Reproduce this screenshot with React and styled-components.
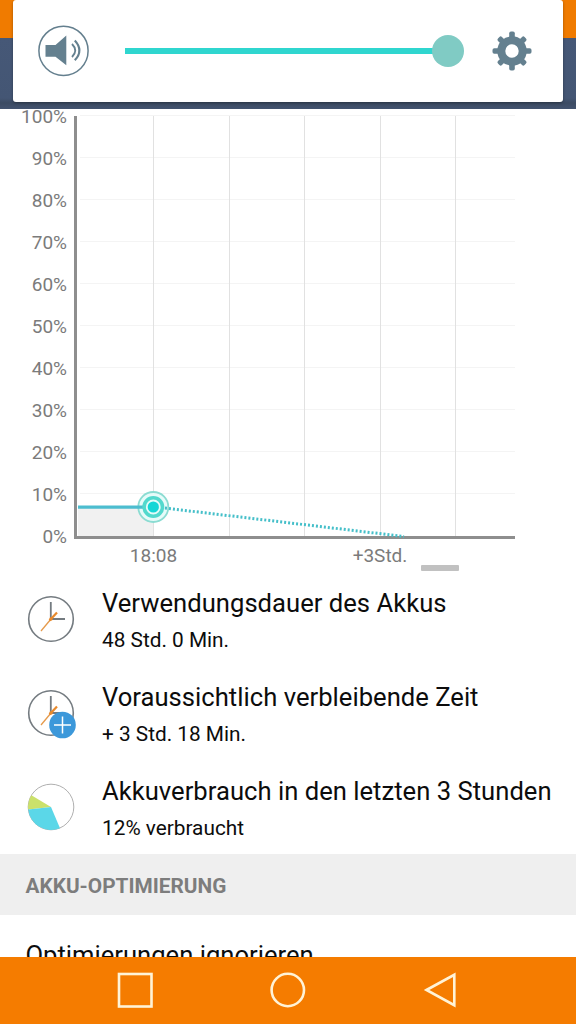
import React from "react";
import styled, { createGlobalStyle } from "styled-components";

const GlobalStyle = createGlobalStyle`
  body {
    margin: 0;
    background: #fff;
    font-family: Roboto, "Noto Sans", sans-serif;
  }
`;

const Screen = styled.div`
  position: relative;
  width: 576px;
  height: 1024px;
  display: flex;
  flex-direction: column;
  overflow: hidden;
  background: #fff;
`;

const StatusBar = styled.div`
  flex: none;
  height: 38px;
  background: #f07b00;
`;
const AppBar = styled.div`
  flex: none;
  height: 71px;
  background: linear-gradient(#465877 0, #445674 60px, #3c4b63 65px, #43536f 71px);
`;

const VolumePanel = styled.div`
  position: absolute;
  top: 0;
  left: 13px;
  width: 550px;
  height: 102px;
  box-sizing: border-box;
  padding: 0 31px 0 24px;
  display: flex;
  align-items: center;
  background: #fff;
  border-radius: 3px;
  box-shadow: 0 1px 3px rgba(0, 0, 0, 0.35);
`;
const Slider = styled.div`
  flex: 1;
  display: flex;
  align-items: center;
  margin: 0 28px 0 36px;
`;
const Track = styled.div`
  flex: 1;
  height: 6px;
  margin-right: -2px;
  background: #2fd6cf;
`;
const Thumb = styled.div`
  width: 32px;
  height: 32px;
  border-radius: 50%;
  background: #80cbc4;
`;

const Content = styled.div`
  flex: 1;
  min-height: 0;
  overflow: hidden;
`;

const Chart = styled.div`
  height: 463px;
  display: grid;
  grid-template-columns: 74px 442px;
  grid-template-rows: 431px 32px;
  overflow: hidden;
`;
const YAxis = styled.div`
  display: flex;
  flex-direction: column;
  margin-top: -13px;
  padding-right: 7px;
  text-align: right;
`;
const YLabel = styled.div`
  flex: none;
  height: 42px;
  line-height: 42px;
  font-size: 19px;
  color: #7b7b7b;
`;
const XAxis = styled.div`
  grid-column: 2;
  display: flex;
  align-items: flex-start;
  padding-left: 55px;
`;
const XLabel = styled.div`
  width: ${(p) => p.$width}px;
  line-height: 32px;
  margin-right: ${(p) => p.$gap}px;
  font-size: 19px;
  text-align: center;
  white-space: nowrap;
  color: #7b7b7b;
`;
const ScrollHandle = styled.div`
  width: 38px;
  height: 6px;
  margin-top: 25px;
  border-radius: 1px;
  background: #c1c1c1;
`;

const InfoRow = styled.div`
  height: 94px;
  display: flex;
  align-items: center;
  padding-left: 26px;
`;
const InfoText = styled.div`
  padding-top: 5px;
  margin-left: 24px;
  color: #0c0c0c;
  white-space: nowrap;
`;
const InfoTitle = styled.div`
  font-size: 25.6px;
  letter-spacing: 0.02px;
  line-height: 36px;
`;
const InfoValue = styled.div`
  padding-top: 1px;
  font-size: 20.8px;
  line-height: 36px;
`;

const SectionHeader = styled.div`
  height: 61px;
  line-height: 64px;
  padding-left: 25.5px;
  background: #efefef;
  color: #7d7d7d;
  font-size: 20.8px;
  font-weight: 700;
`;
const ListItem = styled.div`
  padding: 21px 25.5px 0;
  font-size: 25.6px;
  line-height: 38px;
  white-space: nowrap;
  color: #0c0c0c;
`;

const NavBar = styled.div`
  flex: none;
  height: 67px;
  box-sizing: border-box;
  padding-bottom: 1px;
  display: flex;
  justify-content: center;
  align-items: center;
  gap: 115px;
  background: #f57c00;
`;

const percents = [100, 90, 80, 70, 60, 50, 40, 30, 20, 10, 0];
const gridX = [79.5, 155.5, 230.5, 306.5, 381.5];

function SpeakerIcon() {
  return (
    <svg width="52" height="52" viewBox="0 0 52 52">
      <circle cx="26.5" cy="25.8" r="24.6" fill="none" stroke="#647f8e" strokeWidth="1.5" />
      <path d="M8.5 20H18.5L29.3 10.5V40.3L18.5 31.7H8.5Z" fill="#64808f" />
      <path d="M35 19Q41.5 25.5 35 32" fill="none" stroke="#64808f" strokeWidth="1.9" />
      <path d="M37.8 15.5Q47 25.5 37.8 35.3" fill="none" stroke="#64808f" strokeWidth="2.1" />
    </svg>
  );
}

function GearIcon() {
  return (
    <svg width="40" height="40" viewBox="-20 -20 40 40">
      <g fill="#64808f">
        {[0, 45, 90, 135, 180, 225, 270, 315].map((a) => (
          <rect
            key={a}
            x="-2.8"
            y={a % 90 ? -18.8 : -19.5}
            width="5.6"
            height="9"
            rx="1.8"
            transform={`rotate(${a})`}
          />
        ))}
      </g>
      <circle r="10.7" fill="none" stroke="#64808f" strokeWidth="8" />
    </svg>
  );
}

function Plot() {
  return (
    <svg width="442" height="431" viewBox="0 0 442 431">
      {percents.slice(0, 10).map((p, i) => (
        <path key={p} d={`M6 ${6.5 + i * 42}H441`} stroke="#f4f4f4" />
      ))}
      {gridX.map((x) => (
        <path key={x} d={`M${x} 7V427`} stroke="#e1e1e1" />
      ))}
      <rect x="4" y="398" width="75" height="29" fill="#f1f1f1" />
      <path d="M0 428.5H441" stroke="#8e8e8e" strokeWidth="3" />
      <path d="M1.5 7V430" stroke="#8e8e8e" strokeWidth="3" />
      <circle cx="79.3" cy="398" r="15" fill="#e6fbf9" stroke="#8bdcd2" strokeWidth="1.8" />
      <path d="M4 398.2H73" stroke="#4cbdcf" strokeWidth="3.2" />
      <path d="M87 398.6L330 427.5" stroke="#45bfc9" strokeWidth="3" strokeDasharray="2 2" />
      <circle cx="79.3" cy="398" r="9.2" fill="#e6fbf9" stroke="#52d9cd" strokeWidth="3.6" />
      <circle cx="79.3" cy="398" r="5.6" fill="#16d6d6" />
    </svg>
  );
}

function ClockIcon({ plus }) {
  return (
    <svg width="52" height="52" viewBox="0 0 52 52">
      <circle cx="25" cy="26" r="22.3" fill="none" stroke="#747b80" strokeWidth="1.6" />
      <path d="M24.8 9V26H39" fill="none" stroke="#747b80" strokeWidth="1.8" />
      <path d="M15 38L25 26" stroke="#e59a4c" strokeWidth="1.3" />
      <path d="M23.5 27.5L31 19.5" stroke="#e88a2d" strokeWidth="2.2" />
      <circle cx="25" cy="26" r="1.7" fill="#e88a2d" />
      {plus && (
        <>
          <circle cx="36.5" cy="38" r="13.3" fill="#3c98da" />
          <path d="M28 38H45M36.5 29.5V46.5" stroke="#fff" strokeWidth="1.5" />
        </>
      )}
    </svg>
  );
}

function PieIcon() {
  return (
    <svg width="52" height="52" viewBox="0 0 52 52">
      <circle cx="25" cy="26" r="22.8" fill="#fff" stroke="#9b9b9b" strokeWidth="0.8" />
      <path d="M25 26L5.4 14.3A23 23 0 0 0 2.2 28.5Z" fill="#cbe16b" />
      <path d="M25 26L2.2 28.5A23 23 0 0 0 34 47.2Z" fill="#5bd7e8" />
    </svg>
  );
}

const rows = [
  { icon: <ClockIcon />, title: "Verwendungsdauer des Akkus", value: "48 Std. 0 Min." },
  { icon: <ClockIcon plus />, title: "Voraussichtlich verbleibende Zeit", value: "+ 3 Std. 18 Min." },
  { icon: <PieIcon />, title: "Akkuverbrauch in den letzten 3 Stunden", value: "12% verbraucht" },
];

export default function App() {
  return (
    <Screen>
      <GlobalStyle />
      <StatusBar />
      <AppBar />
      <Content>
        <Chart>
          <YAxis>
            {percents.map((p) => (
              <YLabel key={p}>{p}%</YLabel>
            ))}
          </YAxis>
          <Plot />
          <XAxis>
            <XLabel $width={49} $gap={174}>18:08</XLabel>
            <XLabel $width={56} $gap={13}>+3Std.</XLabel>
            <ScrollHandle />
          </XAxis>
        </Chart>
        {rows.map((row) => (
          <InfoRow key={row.title}>
            {row.icon}
            <InfoText>
              <InfoTitle>{row.title}</InfoTitle>
              <InfoValue>{row.value}</InfoValue>
            </InfoText>
          </InfoRow>
        ))}
        <SectionHeader>AKKU-OPTIMIERUNG</SectionHeader>
        <ListItem>Optimierungen ignorieren</ListItem>
      </Content>
      <NavBar>
        <svg width="38" height="38" viewBox="0 0 38 38">
          <rect x="3" y="3" width="32.5" height="32.5" fill="none" stroke="#fff3d6" strokeWidth="2.6" />
        </svg>
        <svg width="38" height="38" viewBox="0 0 38 38">
          <circle cx="18.8" cy="19" r="16.2" fill="none" stroke="#fff3d6" strokeWidth="2.6" />
        </svg>
        <svg width="38" height="38" viewBox="0 0 38 38">
          <path d="M4.5 19L32.3 3.8V34.2Z" fill="none" stroke="#fff3d6" strokeWidth="2.6" />
        </svg>
      </NavBar>
      <VolumePanel>
        <SpeakerIcon />
        <Slider>
          <Track />
          <Thumb />
        </Slider>
        <GearIcon />
      </VolumePanel>
    </Screen>
  );
}
